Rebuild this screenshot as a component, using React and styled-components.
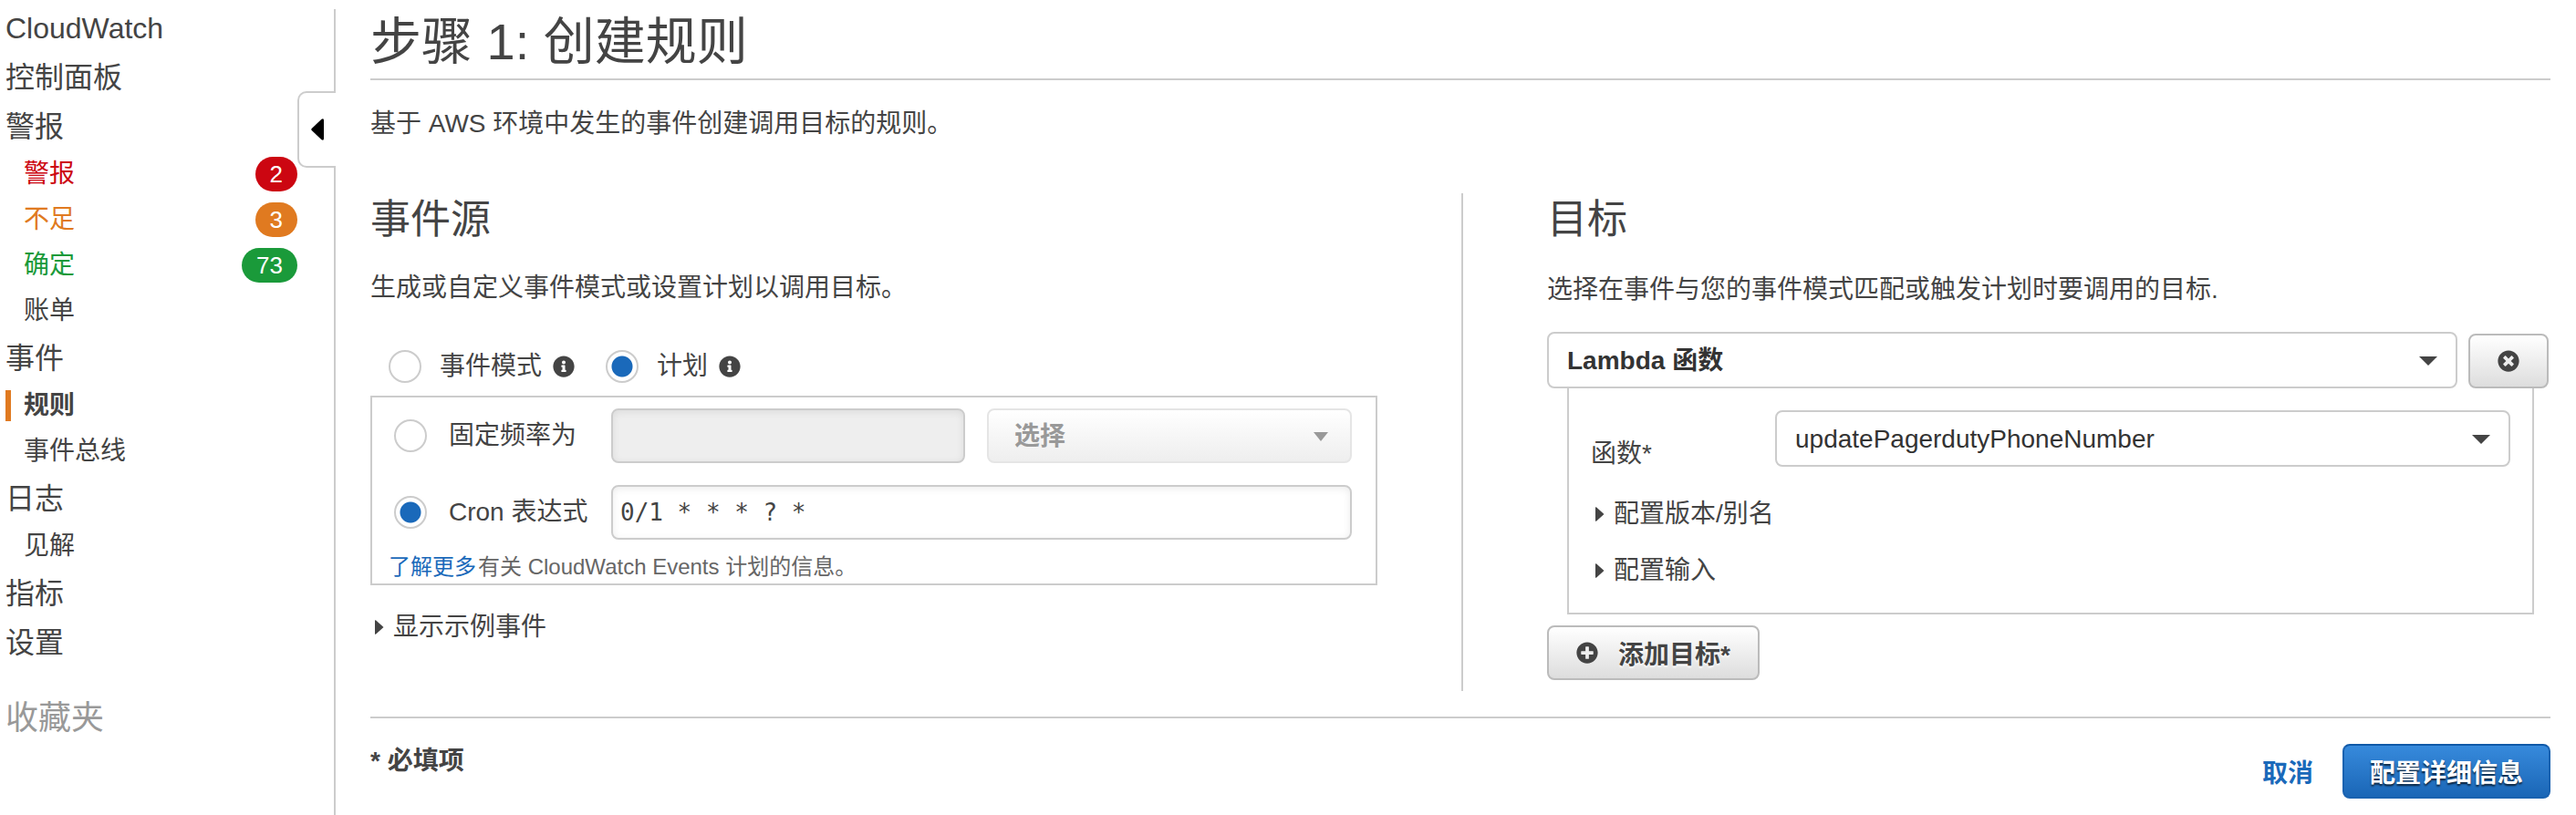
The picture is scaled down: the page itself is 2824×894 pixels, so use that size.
import React from "react";
import styled, { createGlobalStyle } from "styled-components";
import { FaInfoCircle, FaPlusCircle, FaTimesCircle } from "react-icons/fa";

const line = "#ccc";
const text = "#444";
const blue = "#1a69ba";
const orange = "#e07a20";

const Global = createGlobalStyle`
  *, *::before, *::after { box-sizing: border-box; }
  body {
    margin: 0;
    background: #fff;
    color: ${text};
    font-family: "Liberation Sans", "Noto Sans CJK SC", sans-serif;
    font-size: 28px;
  }
  button, input, select { font: inherit; color: inherit; margin: 0; }
`;

const Page = styled.div`
  display: flex;
  min-height: 100vh;
`;

const Sidebar = styled.aside`
  flex: 0 0 368px;
  display: flex;
`;

const Nav = styled.nav`
  flex: 1;
  padding-top: 4px;
`;

const NavItem = styled.a`
  display: block;
  height: 54px;
  padding-left: 6px;
  font-size: 32px;
  line-height: 54px;
  color: ${text};
  text-decoration: none;
`;

const NavSubItem = styled.a`
  display: flex;
  align-items: center;
  justify-content: space-between;
  height: 50px;
  margin-left: 6px;
  color: ${(p) => p.$color || text};
  font-weight: ${(p) => (p.$active ? "bold" : "normal")};
  text-decoration: none;
`;

const NavLabel = styled.span`
  line-height: 34px;
  padding-left: 14px;
  border-left: 6px solid ${(p) => (p.$active ? orange : "transparent")};
`;

const Badge = styled.span`
  height: 38px;
  line-height: 38px;
  padding: 0 16px;
  border-radius: 19px;
  font-size: 26px;
  color: #fff;
  background: ${(p) => p.$color};
`;

const Favorites = styled.h2`
  margin: 36px 0 0;
  padding-left: 6px;
  font-size: 36px;
  font-weight: normal;
  line-height: 40px;
  color: #999;
`;

const Rail = styled.div`
  flex: 0 0 42px;
  display: flex;
  flex-direction: column;
  padding-top: 10px;
`;

const RailLine = styled.div`
  flex: ${(p) => (p.$grow ? "1" : "0 0 90px")};
  border-right: 2px solid ${line};
`;

const CollapseTab = styled.button`
  flex: 0 0 84px;
  padding: 0 0 0 13px;
  display: flex;
  align-items: center;
  background: none;
  border: 2px solid ${line};
  border-right: 0;
  border-radius: 10px 0 0 10px;
`;

const Main = styled.main`
  flex: 1;
  min-width: 0;
  padding: 6px 28px 16px 38px;
`;

const Title = styled.h1`
  margin: 0;
  font-size: 56px;
  font-weight: normal;
  line-height: 80px;
  border-bottom: 2px solid ${line};
`;

const Paragraph = styled.p`
  margin: ${(p) => (p.$tight ? "26px" : "28px")} 0 0;
  line-height: 40px;
`;

const Columns = styled.div`
  display: flex;
  margin-top: 56px;
`;

const SourceColumn = styled.section`
  flex: 0 0 calc(50% + 3px);
  padding-right: 92px;
  border-right: 2px solid ${line};
`;

const TargetColumn = styled.section`
  flex: 1;
  min-width: 0;
  padding: 0 2px 12px 92px;
`;

const Heading = styled.h2`
  margin: 0;
  font-size: 44px;
  font-weight: normal;
  line-height: 58px;
`;

const ModeRow = styled.div`
  display: flex;
  gap: 34px;
  margin-top: 48px;
  padding-left: 20px;
`;

const Mode = styled.div`
  display: flex;
  align-items: center;
  gap: 12px;
`;

const RadioLabel = styled.label`
  display: flex;
  align-items: center;
  gap: ${(p) => (p.$wide ? "24px" : "20px")};
  line-height: 36px;
`;

const Radio = styled.input.attrs({ type: "radio" })`
  appearance: none;
  width: 36px;
  height: 36px;
  border: 2px solid ${line};
  border-radius: 50%;
  background: #fff;
  &:checked {
    background: radial-gradient(circle, ${blue} 11px, #fff 12px);
  }
`;

const ScheduleBox = styled.div`
  margin-top: 14px;
  padding: 12px 26px 0 18px;
  border: 2px solid ${line};
`;

const ScheduleRow = styled.div`
  display: flex;
  gap: 24px;
  padding-left: 6px;
  & + & { margin-top: 24px; }
`;

const ScheduleChoice = styled.div`
  flex: 0 0 214px;
  display: flex;
  align-items: center;
  white-space: nowrap;
`;

const TextInput = styled.input`
  flex: 1;
  min-width: 0;
  height: 60px;
  padding: 0 8px;
  border: 2px solid ${line};
  border-radius: 8px;
  background: #fff;
  box-shadow: inset 0 2px 8px rgba(0, 0, 0, 0.08);
  font-family: "DejaVu Sans Mono", monospace;
  font-size: 26px;
  &:disabled { background: #eee; }
`;

const SelectWrap = styled.div`
  position: relative;
  flex: ${(p) => p.$basis || "1"};
  min-width: 0;
  display: flex;
`;

const Select = styled.select`
  appearance: none;
  width: 100%;
  height: ${(p) => (p.$short ? "60px" : "62px")};
  padding: 0 60px 0 20px;
  border: 2px solid ${line};
  border-radius: 8px;
  background: #fff;
  color: #333;
  font-weight: ${(p) => (p.$bold ? "bold" : "normal")};
  &:disabled {
    padding-left: 28px;
    border-color: #e5e5e5;
    background: linear-gradient(#fff, #eee);
    color: #999;
    opacity: 1;
  }
`;

const Caret = styled.svg`
  position: absolute;
  top: 50%;
  right: ${(p) => (p.$small ? "26px" : "22px")};
  width: ${(p) => (p.$small ? "16px" : "20px")};
  height: 10px;
  margin-top: -4px;
  fill: ${(p) => (p.$small ? "#999" : text)};
  pointer-events: none;
`;

const Hint = styled.p`
  display: flex;
  gap: 2px;
  margin: 12px 0 0;
  font-size: 24px;
  line-height: 36px;
  color: #666;
`;

const Link = styled.a`
  color: ${blue};
  text-decoration: none;
`;

const Disclosure = styled.button`
  display: flex;
  align-items: center;
  gap: 10px;
  margin-top: ${(p) => p.$top};
  padding: 0 0 0 5px;
  border: 0;
  background: none;
  line-height: 40px;
`;

const TargetRow = styled.div`
  display: flex;
  align-items: flex-end;
  gap: 12px;
  margin-top: 26px;
`;

const TargetPanel = styled.div`
  margin: 0 16px 0 22px;
  padding: 24px 24px 26px;
  border: 2px solid ${line};
  border-top: 0;
`;

const Field = styled.div`
  display: flex;
  align-items: flex-end;
`;

const FieldLabel = styled.label`
  flex: 0 0 202px;
  line-height: 28px;
`;

const Button = styled.button`
  display: flex;
  align-items: center;
  justify-content: center;
  gap: 22px;
  height: 60px;
  padding: 0 30px;
  border: 2px solid #bbb;
  border-radius: 8px;
  background: linear-gradient(#fff, #ddd);
  font-weight: bold;
  text-shadow: 0 2px 2px #fff;
`;

const AddButton = styled(Button)`
  margin-top: 12px;
`;

const PrimaryButton = styled(Button)`
  padding: 0 28px;
  border-color: #0f59a8 #1a62b0 #1a62b0;
  background: linear-gradient(#378adc, #1a66b6);
  color: #fff;
  text-shadow: 0 2px 2px rgba(0, 0, 0, 0.7);
`;

const Footer = styled.footer`
  display: flex;
  justify-content: space-between;
  margin-top: 28px;
  padding-top: 28px;
  border-top: 2px solid ${line};
  font-weight: bold;
`;

const RequiredNote = styled.span`
  line-height: 38px;
`;

const Actions = styled.div`
  display: flex;
  align-items: center;
  gap: 32px;
`;

function Dropdown({ id, label, value, basis, ...rest }) {
  return (
    <SelectWrap $basis={basis}>
      <Select id={id} aria-label={label} defaultValue={value} {...rest}>
        <option>{value}</option>
      </Select>
      <Caret $small={rest.disabled} viewBox="0 0 20 10" preserveAspectRatio="none" aria-hidden="true">
        <path d="M0 0H20L10 10Z" />
      </Caret>
    </SelectWrap>
  );
}

function Expander({ top, children }) {
  return (
    <Disclosure type="button" aria-expanded="false" $top={top}>
      <svg width="10" height="16" viewBox="0 0 10 16" fill={text} aria-hidden="true">
        <path d="M0 0.5Q0.5 0 1.2 0.6L9.5 8L1.2 15.4Q0.5 16 0 15.5Z" />
      </svg>
      <span>{children}</span>
    </Disclosure>
  );
}

function SubItem({ label, color, count, active }) {
  return (
    <NavSubItem href="#" $color={color} $active={active}>
      <NavLabel $active={active}>{label}</NavLabel>
      {count && <Badge $color={color}>{count}</Badge>}
    </NavSubItem>
  );
}

export default function App() {
  return (
    <Page>
      <Global />
      <Sidebar>
        <Nav>
          <NavItem href="#">CloudWatch</NavItem>
          <NavItem href="#">控制面板</NavItem>
          <NavItem href="#">警报</NavItem>
          <SubItem label="警报" color="#cc0611" count="2" />
          <SubItem label="不足" color={orange} count="3" />
          <SubItem label="确定" color="#1a9a3a" count="73" />
          <SubItem label="账单" />
          <NavItem href="#">事件</NavItem>
          <SubItem label="规则" active />
          <SubItem label="事件总线" />
          <NavItem href="#">日志</NavItem>
          <SubItem label="见解" />
          <NavItem href="#">指标</NavItem>
          <NavItem href="#">设置</NavItem>
          <Favorites>收藏夹</Favorites>
        </Nav>
        <Rail>
          <RailLine />
          <CollapseTab type="button" aria-label="折叠导航">
            <svg width="14" height="24" viewBox="0 0 14 24" fill="#000" aria-hidden="true">
              <path d="M11.5 0.8Q14 -0.5 14 2V22Q14 24.5 11.5 23.2L0.7 13Q-0.2 12 0.7 11Z" />
            </svg>
          </CollapseTab>
          <RailLine $grow />
        </Rail>
      </Sidebar>
      <Main>
        <Title>步骤 1: 创建规则</Title>
        <Paragraph>基于 AWS 环境中发生的事件创建调用目标的规则。</Paragraph>
        <Columns>
          <SourceColumn>
            <Heading>事件源</Heading>
            <Paragraph $tight>生成或自定义事件模式或设置计划以调用目标。</Paragraph>
            <ModeRow>
              <Mode>
                <RadioLabel>
                  <Radio name="mode" />
                  事件模式
                </RadioLabel>
                <FaInfoCircle size={24} aria-hidden="true" />
              </Mode>
              <Mode>
                <RadioLabel>
                  <Radio name="mode" defaultChecked />
                  计划
                </RadioLabel>
                <FaInfoCircle size={24} aria-hidden="true" />
              </Mode>
            </ModeRow>
            <ScheduleBox>
              <ScheduleRow>
                <ScheduleChoice>
                  <RadioLabel $wide>
                    <Radio name="schedule" />
                    固定频率为
                  </RadioLabel>
                </ScheduleChoice>
                <TextInput type="text" aria-label="固定频率为" disabled />
                <Dropdown label="频率单位" value="选择" basis="0 0 400px" $short $bold disabled />
              </ScheduleRow>
              <ScheduleRow>
                <ScheduleChoice>
                  <RadioLabel $wide>
                    <Radio name="schedule" defaultChecked />
                    Cron 表达式
                  </RadioLabel>
                </ScheduleChoice>
                <TextInput type="text" aria-label="Cron 表达式" defaultValue="0/1 * * * ? *" />
              </ScheduleRow>
              <Hint>
                <Link href="#">了解更多</Link>
                <span>有关 CloudWatch Events 计划的信息。</span>
              </Hint>
            </ScheduleBox>
            <Expander top="26px">显示示例事件</Expander>
          </SourceColumn>
          <TargetColumn>
            <Heading>目标</Heading>
            <Paragraph>选择在事件与您的事件模式匹配或触发计划时要调用的目标.</Paragraph>
            <TargetRow>
              <Dropdown label="目标类型" value="Lambda 函数" $bold />
              <Button type="button" aria-label="删除目标">
                <FaTimesCircle size={24} aria-hidden="true" />
              </Button>
            </TargetRow>
            <TargetPanel>
              <Field>
                <FieldLabel htmlFor="function">函数*</FieldLabel>
                <Dropdown id="function" value="updatePagerdutyPhoneNumber" />
              </Field>
              <Expander top="32px">配置版本/别名</Expander>
              <Expander top="22px">配置输入</Expander>
            </TargetPanel>
            <AddButton type="button">
              <FaPlusCircle size={24} aria-hidden="true" />
              添加目标*
            </AddButton>
          </TargetColumn>
        </Columns>
        <Footer>
          <RequiredNote>* 必填项</RequiredNote>
          <Actions>
            <Link href="#">取消</Link>
            <PrimaryButton type="button">配置详细信息</PrimaryButton>
          </Actions>
        </Footer>
      </Main>
    </Page>
  );
}
